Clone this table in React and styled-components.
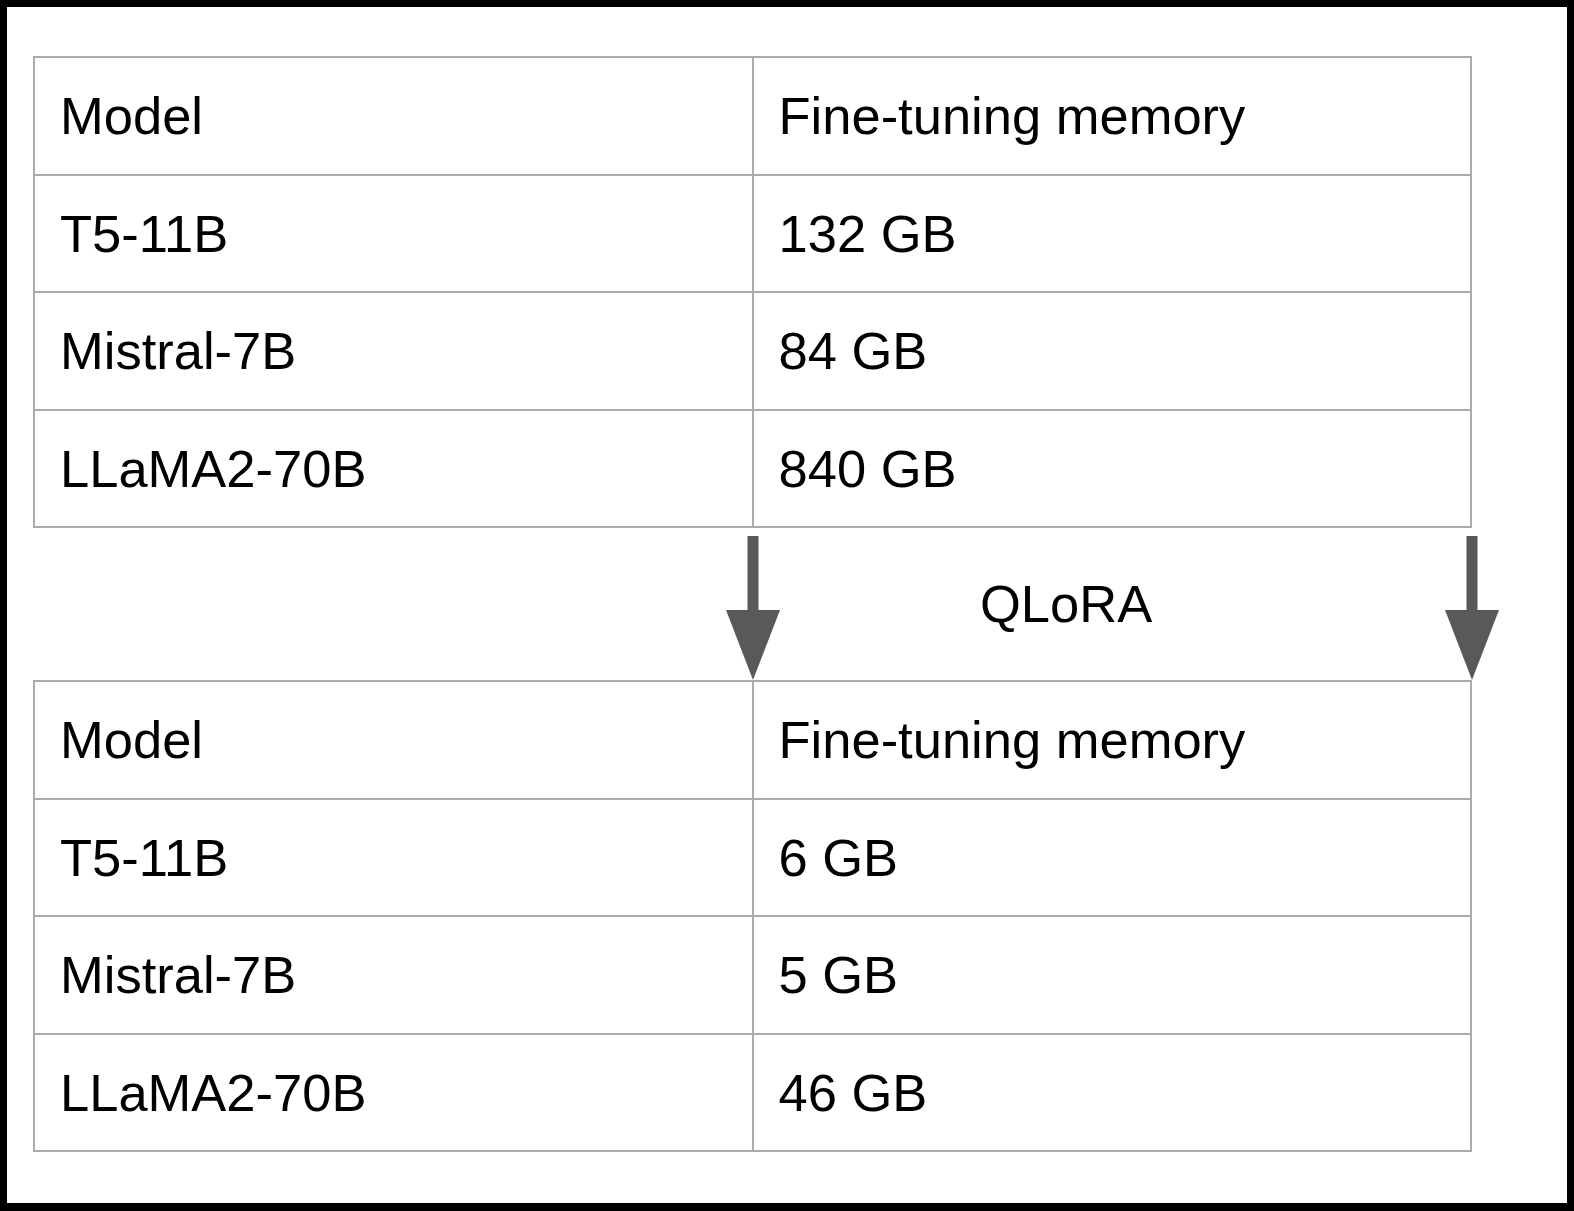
import React from 'react';
import styled, { createGlobalStyle } from 'styled-components';

const GlobalStyle = createGlobalStyle`
  html, body {
    margin: 0;
    padding: 0;
    background: #fff;
  }
  * {
    box-sizing: border-box;
  }
`;

const Frame = styled.div`
  width: 1574px;
  height: 1211px;
  border-style: solid;
  border-color: #000;
  border-width: 7px 7px 8px 7px;
  background: #fff;
  padding: 49px 0 0 26px;
  font-family: 'Liberation Sans', Arial, sans-serif;
  color: #000;
`;

const Table = styled.div`
  display: grid;
  grid-template-columns: 1fr 1fr;
  width: 1439px;
  border-top: 2px solid #ababab;
  border-left: 2px solid #ababab;
`;

const Cell = styled.div`
  height: 117.5px;
  display: flex;
  align-items: center;
  padding-left: 25px;
  padding-top: 1px;
  border-right: 2px solid #ababab;
  border-bottom: 2px solid #ababab;
  font-size: 52.5px;
  line-height: 1;
  white-space: nowrap;
`;

const Band = styled.div`
  position: relative;
  width: 1439px;
  height: 152px;
  display: flex;
  align-items: center;
  padding-left: 947px;
`;

const Label = styled.span`
  font-size: 52.5px;
  line-height: 1;
`;

const ArrowBox = styled.svg`
  position: absolute;
  top: 8px;
  left: ${(p) => p.x}px;
  z-index: 1;
`;

const Arrow = ({ x }) => (
  <ArrowBox x={x} width="54" height="144" viewBox="0 0 54 144">
    <rect x="21.5" y="0" width="11" height="75" fill="#595959" />
    <polygon points="0,74 54,74 27,144" fill="#595959" />
  </ArrowBox>
);

const before = [
  ['Model', 'Fine-tuning memory'],
  ['T5-11B', '132 GB'],
  ['Mistral-7B', '84 GB'],
  ['LLaMA2-70B', '840 GB'],
];

const after = [
  ['Model', 'Fine-tuning memory'],
  ['T5-11B', '6 GB'],
  ['Mistral-7B', '5 GB'],
  ['LLaMA2-70B', '46 GB'],
];

const MemoryTable = ({ rows }) => (
  <Table>
    {rows.map(([model, mem]) => (
      <React.Fragment key={model}>
        <Cell>{model}</Cell>
        <Cell>{mem}</Cell>
      </React.Fragment>
    ))}
  </Table>
);

const App = () => {
  return (
    <>
      <GlobalStyle />
      <Frame>
        <MemoryTable rows={before} />
        <Band>
          <Arrow x={693} />
          <Label>QLoRA</Label>
          <Arrow x={1412} />
        </Band>
        <MemoryTable rows={after} />
      </Frame>
    </>
  );
};

export default App;
